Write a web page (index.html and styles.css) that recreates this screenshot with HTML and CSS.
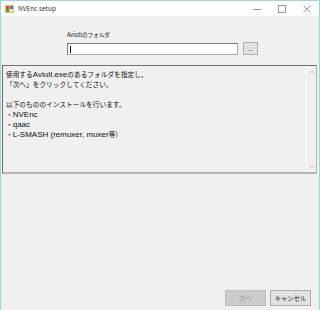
FILE: index.html
```html
<!DOCTYPE html>
<html lang="ja">
<head>
  <meta charset="UTF-8">
  <title>NVEnc setup</title>
  <link rel="stylesheet" href="styles.css">
</head>
<body>
  <div class="window">
    <div class="titlebar">
      <svg class="app-icon" width="10" height="10" viewBox="0 0 10 10">
        <rect x="0" y="1" width="9" height="8" fill="#e8c35a"/>
        <rect x="1" y="2" width="3" height="3" fill="#d9473a"/>
        <rect x="5" y="2" width="3" height="3" fill="#3d7bd8"/>
        <rect x="1" y="5" width="3" height="3" fill="#4aa54a"/>
        <rect x="5" y="5" width="3" height="3" fill="#f3e7b0"/>
      </svg>
      <span class="title">NVEnc setup</span>
      <div class="controls">
        <svg width="8" height="8" viewBox="0 0 8 8"><path d="M0 4.5h8" stroke="#999" stroke-width="1"/></svg>
        <svg width="8" height="8" viewBox="0 0 8 8"><rect x="0.5" y="0.5" width="7" height="7" fill="none" stroke="#999"/></svg>
        <svg width="8" height="8" viewBox="0 0 8 8"><path d="M0.5 0.5l7 7M7.5 0.5l-7 7" stroke="#999"/></svg>
      </div>
    </div>

    <div class="client">
      <div class="folder">
        <div class="label">Aviutlのフォルダ</div>
        <div class="folder-row">
          <div class="input"><span class="caret"></span></div>
          <button class="browse">...</button>
        </div>
      </div>

      <div class="memo">
        <div class="memo-text">
          <p>使用する<span class="lat">Aviutl.exe</span>のあるフォルダを指定し、</p>
          <p>「次へ」をクリックしてください。</p>
          <p>&nbsp;</p>
          <p>以下のもののインストールを行います。</p>
          <p>・<span class="lat">NVEnc</span></p>
          <p>・<span class="lat">qaac</span></p>
          <p>・<span class="lat">L-SMASH (remuxer, muxer</span>等)</p>
        </div>
        <div class="scrollbar">
          <svg width="6" height="4" viewBox="0 0 6 4"><path d="M0.5 3.5l2.5-2.5 2.5 2.5" fill="none" stroke="#c0c0c0"/></svg>
          <svg width="6" height="4" viewBox="0 0 6 4"><path d="M0.5 0.5l2.5 2.5 2.5-2.5" fill="none" stroke="#c0c0c0"/></svg>
        </div>
      </div>

      <div class="footer">
        <button class="btn" disabled>次へ</button>
        <button class="btn">キャンセル</button>
      </div>
    </div>
  </div>
</body>
</html>
```

FILE: styles.css
```css
* {
  box-sizing: border-box;
}

body {
  margin: 0;
  width: 320px;
  height: 310px;
  font-family: "Noto Sans CJK JP", "Noto Sans", sans-serif;
  color: #000;
}

.window {
  width: 320px;
  height: 310px;
  border: 1px solid #9fd6db;
  border-bottom: none;
  background: #f0f0f0;
  display: flex;
  flex-direction: column;
}

.titlebar {
  height: 15px;
  background: #fff;
  display: flex;
  align-items: center;
  padding-left: 4px;
}

.app-icon {
  margin-right: 3px;
}

.title {
  font-size: 6.5px;
  color: #333;
  line-height: 1;
}

.controls {
  margin-left: auto;
  display: flex;
  gap: 17px;
  padding-right: 8px;
}

.client {
  flex: 1;
  display: flex;
  flex-direction: column;
}

.folder {
  padding: 15px 0 0 66px;
}

.label {
  font-size: 5.6px;
  line-height: 8px;
  height: 10px;
  color: #111;
}

.folder-row {
  display: flex;
  align-items: center;
  gap: 5px;
  margin-top: 1px;
}

.input {
  width: 171px;
  height: 12px;
  background: #fff;
  border: 1px solid #7a7a7a;
  border-color: #7a7a7a #a9a9a9 #a9a9a9 #7a7a7a;
  padding: 2px 0 0 2px;
}

.caret {
  display: block;
  width: 1px;
  height: 7px;
  background: #000;
}

.browse {
  width: 15px;
  height: 13px;
  padding: 0;
  font-size: 6px;
  line-height: 8px;
  font-family: inherit;
  background: #e1e1e1;
  border: 1px solid #adadad;
  color: #333;
}

.memo {
  margin: 10px 2px 0 1px;
  height: 109px;
  border-top: 1px solid #6e6e6e;
  border-left: 1px solid #6e6e6e;
  border-right: 1px solid #b5b5b5;
  border-bottom: 2px solid #b5b5b5;
  display: flex;
}

.memo-text {
  flex: 1;
  padding: 3px 0 0 3px;
  font-size: 6.7px;
  line-height: 10px;
  color: #111;
}

.memo-text p {
  margin: 0;
  height: 10px;
  white-space: nowrap;
}

.lat {
  font-family: "Liberation Sans", sans-serif;
  font-size: 8px;
  line-height: 1;
}

.scrollbar {
  width: 10px;
  border-left: 1px solid #fff;
  display: flex;
  flex-direction: column;
  justify-content: space-between;
  align-items: center;
  padding: 4px 0 3px;
}

.footer {
  margin-top: auto;
  display: flex;
  justify-content: flex-end;
  gap: 4px;
  padding: 0 8px 4px 0;
}

.btn {
  width: 41px;
  height: 16px;
  padding: 0;
  font-family: inherit;
  font-size: 6.3px;
  background: #e1e1e1;
  border: 1px solid #adadad;
  color: #222;
}

.btn:disabled {
  background: #cccccc;
  border-color: #bfbfbf;
  color: #a0a0a0;
}
```
